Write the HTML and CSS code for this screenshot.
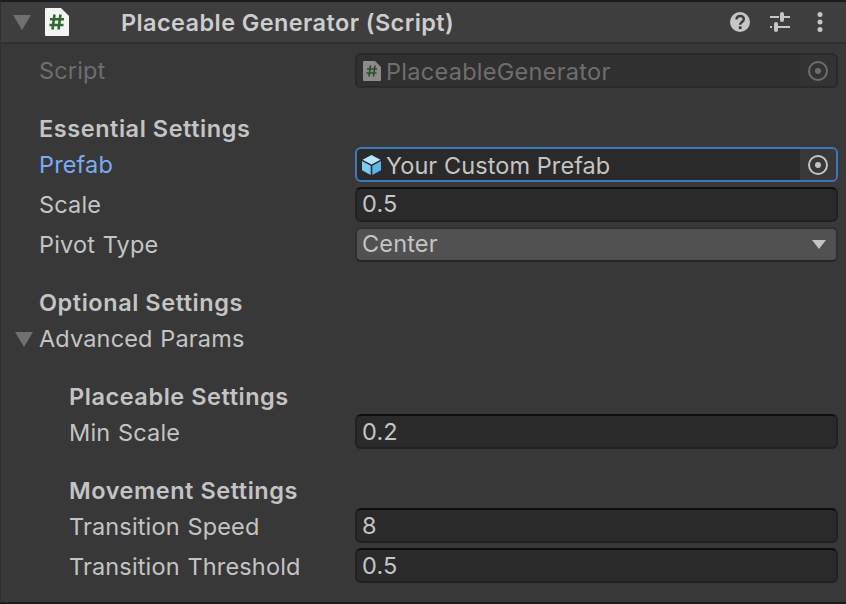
FILE: index.html
```html
<!DOCTYPE html>
<html lang="en">
<head>
  <meta charset="UTF-8" />
  <title>Placeable Generator (Script)</title>
  <link rel="stylesheet" href="styles.css">
</head>
<body>
  <div class="inspector">
    <header class="head">
      <svg class="fold" viewBox="0 0 20 16"><path d="M1 1h18l-9 15z" /></svg>
      <svg class="doc" viewBox="0 0 24 28">
        <path d="M0 1a1 1 0 0 1 1-1h15l8 8v19a1 1 0 0 1-1 1H1a1 1 0 0 1-1-1z" fill="#f4f4f4" />
        <path d="M9.500 6.500l-2 15M15.500 6.500l-2 15M5 11.200h14M4.500 17h14" stroke="#2f6b2f" stroke-width="2.600" fill="none" />
      </svg>
      <h2 class="title">Placeable Generator (Script)</h2>
      <div class="tools">
        <svg class="tool" viewBox="0 0 20 20">
          <circle cx="10" cy="10" r="10" fill="#c6c6c6" />
          <path d="M6.500 7.500c0-5 7.500-4.500 7.300-.3 0 2.900-3.600 2.700-3.600 5.500" stroke="#3e3e3e" stroke-width="2.500" fill="none" />
          <circle cx="10.200" cy="15.700" r="1.600" fill="#3e3e3e" />
        </svg>
        <svg class="tool" viewBox="0 0 20 20">
          <path d="M0 5h9M14 5h6M0 15h2M8 15h12" stroke="#c6c6c6" stroke-width="2" />
          <rect x="10" y="0" width="4" height="10" rx="2" fill="#c6c6c6" />
          <rect x="4" y="10" width="4" height="10" rx="2" fill="#c6c6c6" />
        </svg>
        <svg class="tool" viewBox="0 0 20 20">
          <circle cx="10" cy="2.500" r="2.500" fill="#c6c6c6" />
          <circle cx="10" cy="10" r="2.500" fill="#c6c6c6" />
          <circle cx="10" cy="17.500" r="2.500" fill="#c6c6c6" />
        </svg>
      </div>
    </header>

    <div class="body">
      <div class="row">
        <span class="label muted">Script</span>
        <div class="field object disabled">
          <svg class="doc-small" viewBox="0 0 18 20">
            <path d="M0 1a1 1 0 0 1 1-1h11l6 6v13a1 1 0 0 1-1 1H1a1 1 0 0 1-1-1z" fill="#8b8b8b" />
            <path d="M7.500 4.500l-1.500 11M12 4.500l-1.500 11M4 8h10M3.500 12h10" stroke="#2c4f2c" stroke-width="1.700" fill="none" />
          </svg>
          <span class="value">PlaceableGenerator</span>
          <span class="picker"><span class="target"></span></span>
        </div>
      </div>

      <h3 class="heading">Essential Settings</h3>
      <div class="row">
        <span class="label active">Prefab</span>
        <div class="field object focused">
          <svg class="cube" viewBox="0 0 20 20">
            <path d="M10 0l9 4.700L10 9.500 1 4.700z" fill="#b5e4fb" />
            <path d="M0.500 6l8.700 4.800V20L0.500 15.200z" fill="#7ccbf5" />
            <path d="M19.500 6l-8.700 4.800V20l8.700-4.800z" fill="#5cb6ec" />
          </svg>
          <span class="value">Your Custom Prefab</span>
          <span class="picker"><span class="target"></span></span>
        </div>
      </div>
      <div class="row">
        <span class="label">Scale</span>
        <div class="field">0.5</div>
      </div>
      <div class="row">
        <span class="label">Pivot Type</span>
        <div class="field dropdown">
          Center
          <svg class="caret" viewBox="0 0 14 9"><path d="M0 0h14L7 9z" /></svg>
        </div>
      </div>

      <h3 class="heading">Optional Settings</h3>
      <div class="foldout">
        <svg class="fold" viewBox="0 0 20 16"><path d="M1 1h18l-9 15z" /></svg>
        <span class="label">Advanced Params</span>
      </div>

      <div class="nested">
        <h3 class="heading">Placeable Settings</h3>
        <div class="row">
          <span class="label">Min Scale</span>
          <div class="field">0.2</div>
        </div>

        <h3 class="heading">Movement Settings</h3>
        <div class="row">
          <span class="label">Transition Speed</span>
          <div class="field">8</div>
        </div>
        <div class="row">
          <span class="label">Transition Threshold</span>
          <div class="field">0.5</div>
        </div>
      </div>
    </div>
  </div>
</body>
</html>
```

FILE: styles.css
```css
html, body { margin: 0; height: 100%; background: #383838; }
body { font-family: Inter, "Noto Sans", sans-serif; font-size: 23.500px; letter-spacing: 0.15px; word-spacing: 1px; color: #c4c4c4; overflow: hidden; }

.inspector { height: 604px; box-sizing: border-box; border-top: 2px solid #1c1c1c; border-bottom: 2px solid #1c1c1c; border-left: 1px solid #303030; }

.head { display: flex; align-items: center; height: 40px; background: #3e3e3e; border-bottom: 2px solid #303030; padding-left: 11px; padding-right: 16px; }
.fold { width: 20px; height: 16px; flex: none; fill: #707070; }
.doc { width: 24px; height: 28px; margin-left: 13px; flex: none; }
.title { margin: 0 0 0 52px; font-size: 23.500px; font-weight: 600; letter-spacing: 0.4px; word-spacing: 0; color: #cdcdcd; flex: 1; }
.tools { display: flex; gap: 20px; }
.tool { width: 20px; height: 20px; }

.body { padding: 7px 8px 0 38px; }
.row { display: flex; align-items: flex-start; height: 40px; padding-top: 2px; box-sizing: border-box; }
.label { width: 316px; flex: none; line-height: 35px; }
.muted { color: #6e6e6e; }
.active { color: #7babf4; }

.heading { margin: 20px 0 0; height: 34px; line-height: 36px; font-size: 23.500px; font-weight: 600; letter-spacing: 0.55px; word-spacing: 0; color: #c4c4c4; }

.foldout { display: flex; align-items: center; height: 36px; margin: 2px 0 0 -25px; }
.foldout .fold { margin-right: 5px; }
.foldout .label { margin-top: -2px; }

.nested { padding-left: 30px; }
.nested .label { width: 286px; margin-top: 1px; }
.nested .field { padding-bottom: 0; }
.nested .heading { margin-top: 22px; }
.nested .heading + .row { margin-top: -1px; }
.nested .row + .heading { margin-top: 21px; }

.field { flex: 1; display: flex; align-items: center; height: 35px; box-sizing: border-box; padding: 0 0 2px 5px; background: #2a2a2a; border: 2px solid #212121; border-top-color: #0e0e0e; border-radius: 6px; }

.object { padding: 0 0 0 6px; overflow: hidden; }
.object .value { flex: 1; margin-left: 5px; padding-top: 2px; letter-spacing: 0.08px; word-spacing: 0; }
.disabled .value { letter-spacing: 0.28px; }
.picker { display: flex; align-items: center; justify-content: center; width: 36px; height: 100%; background: #383838; }
.target { width: 20px; height: 20px; box-sizing: border-box; border: 2px solid #c4c4c4; border-radius: 50%; display: flex; align-items: center; justify-content: center; }
.target::after { content: ""; width: 6px; height: 6px; border-radius: 50%; background: #c4c4c4; }

.disabled { background: #303030; border-color: #2a2a2a; color: #6e6e6e; }
.disabled .picker { background: #333333; }
.disabled .target { border-color: #6e6e6e; }
.disabled .target::after { background: #6e6e6e; }

.focused { border-color: #3a79bb; padding-left: 4px; }
.focused .value { margin-left: 4px; }

.doc-small { width: 18px; height: 20px; flex: none; }
.cube { width: 21px; height: 20px; flex: none; }

.dropdown { justify-content: space-between; background: #515151; border-color: #303030; border-bottom-color: #242424; padding: 0 10px 2px 5px; }
.caret { width: 14px; height: 9px; fill: #c4c4c4; margin-top: 2px; }
```
